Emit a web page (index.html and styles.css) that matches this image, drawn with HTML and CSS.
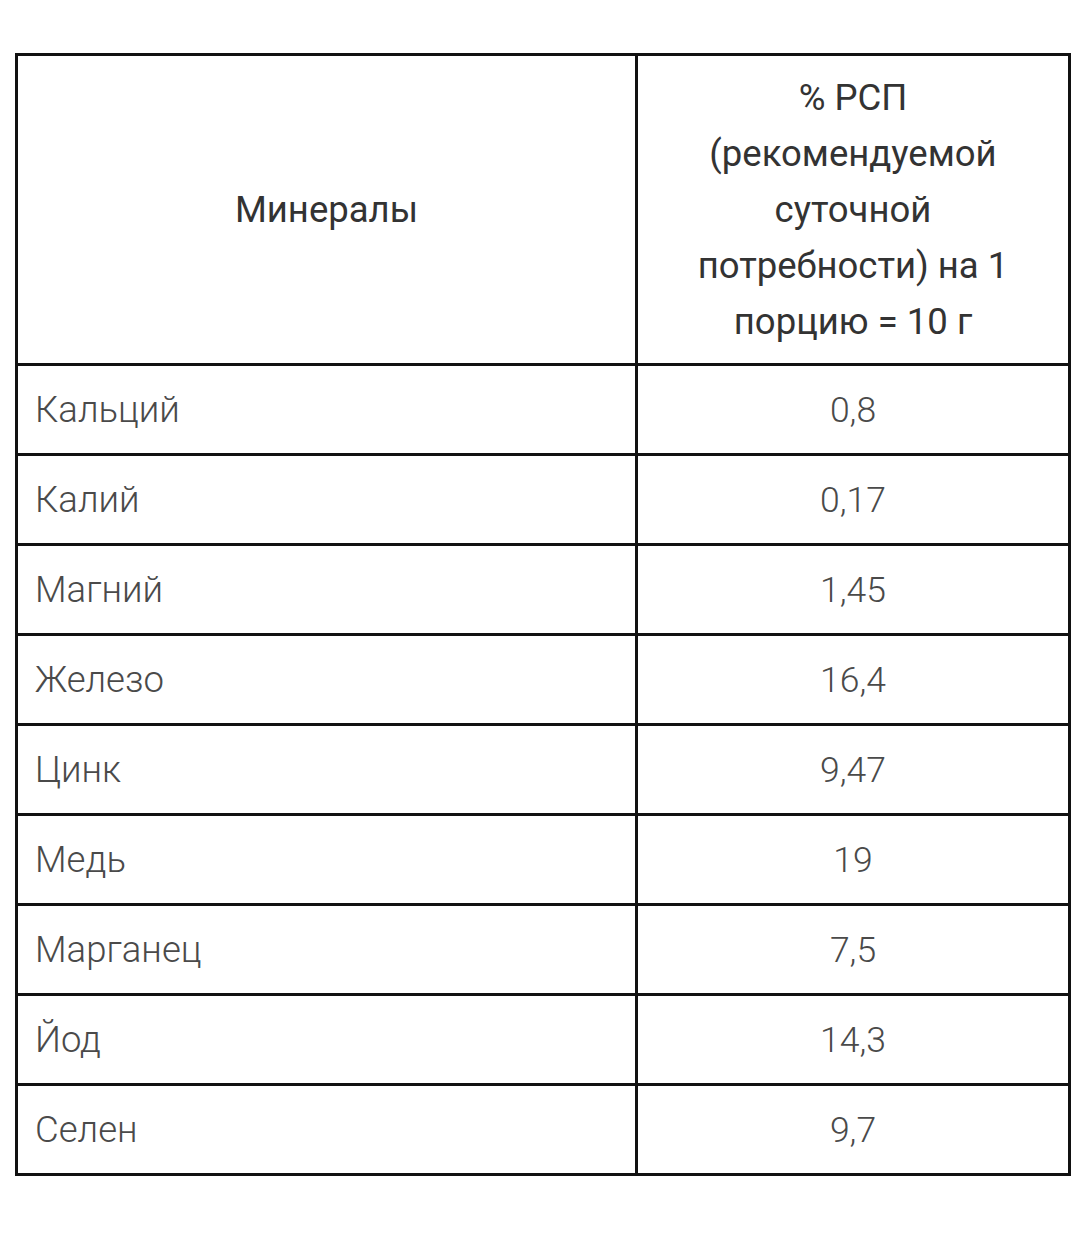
FILE: index.html
```html
<!DOCTYPE html>
<html lang="ru">
<head>
<meta charset="utf-8">
<link rel="stylesheet" href="styles.css">
</head>
<body>
<div class="page">
<table class="minerals">
  <thead>
    <tr>
      <th class="name-head">Минералы</th>
      <th class="val-head">% РСП<br>(рекомендуемой<br>суточной<br>потребности) на 1<br>порцию = 10 г</th>
    </tr>
  </thead>
  <tbody>
    <tr><td class="name">Кальций</td><td class="val">0,8</td></tr>
    <tr><td class="name">Калий</td><td class="val">0,17</td></tr>
    <tr><td class="name">Магний</td><td class="val">1,45</td></tr>
    <tr><td class="name">Железо</td><td class="val">16,4</td></tr>
    <tr><td class="name">Цинк</td><td class="val">9,47</td></tr>
    <tr><td class="name">Медь</td><td class="val">19</td></tr>
    <tr><td class="name">Марганец</td><td class="val">7,5</td></tr>
    <tr><td class="name">Йод</td><td class="val">14,3</td></tr>
    <tr><td class="name">Селен</td><td class="val">9,7</td></tr>
  </tbody>
</table>
</div>
</body>
</html>
```
FILE: styles.css
```css
html, body {
  margin: 0;
  padding: 0;
  background: #ffffff;
}
.page {
  padding: 53px 0 0 15px;
}
.minerals {
  border-collapse: collapse;
  width: 1056px;
  table-layout: fixed;
  font-family: Roboto, "Liberation Sans", sans-serif;
  color: #4a4a4a;
}
.minerals th,
.minerals td {
  border: 3px solid #111;
  padding: 0;
}
.minerals th {
  font-weight: 400;
  font-size: 36.5px;
  line-height: 56px;
  color: #333;
  height: 307px;
  text-align: center;
  vertical-align: middle;
}
.name-head {
  width: 617px;
}
.minerals td {
  height: 87px;
  font-size: 36.5px;
  font-weight: 300;
  vertical-align: middle;
}
.minerals td.name {
  padding-left: 17px;
  text-align: left;
}
.minerals td.val {
  font-size: 35.5px;
  text-align: center;
}
```
